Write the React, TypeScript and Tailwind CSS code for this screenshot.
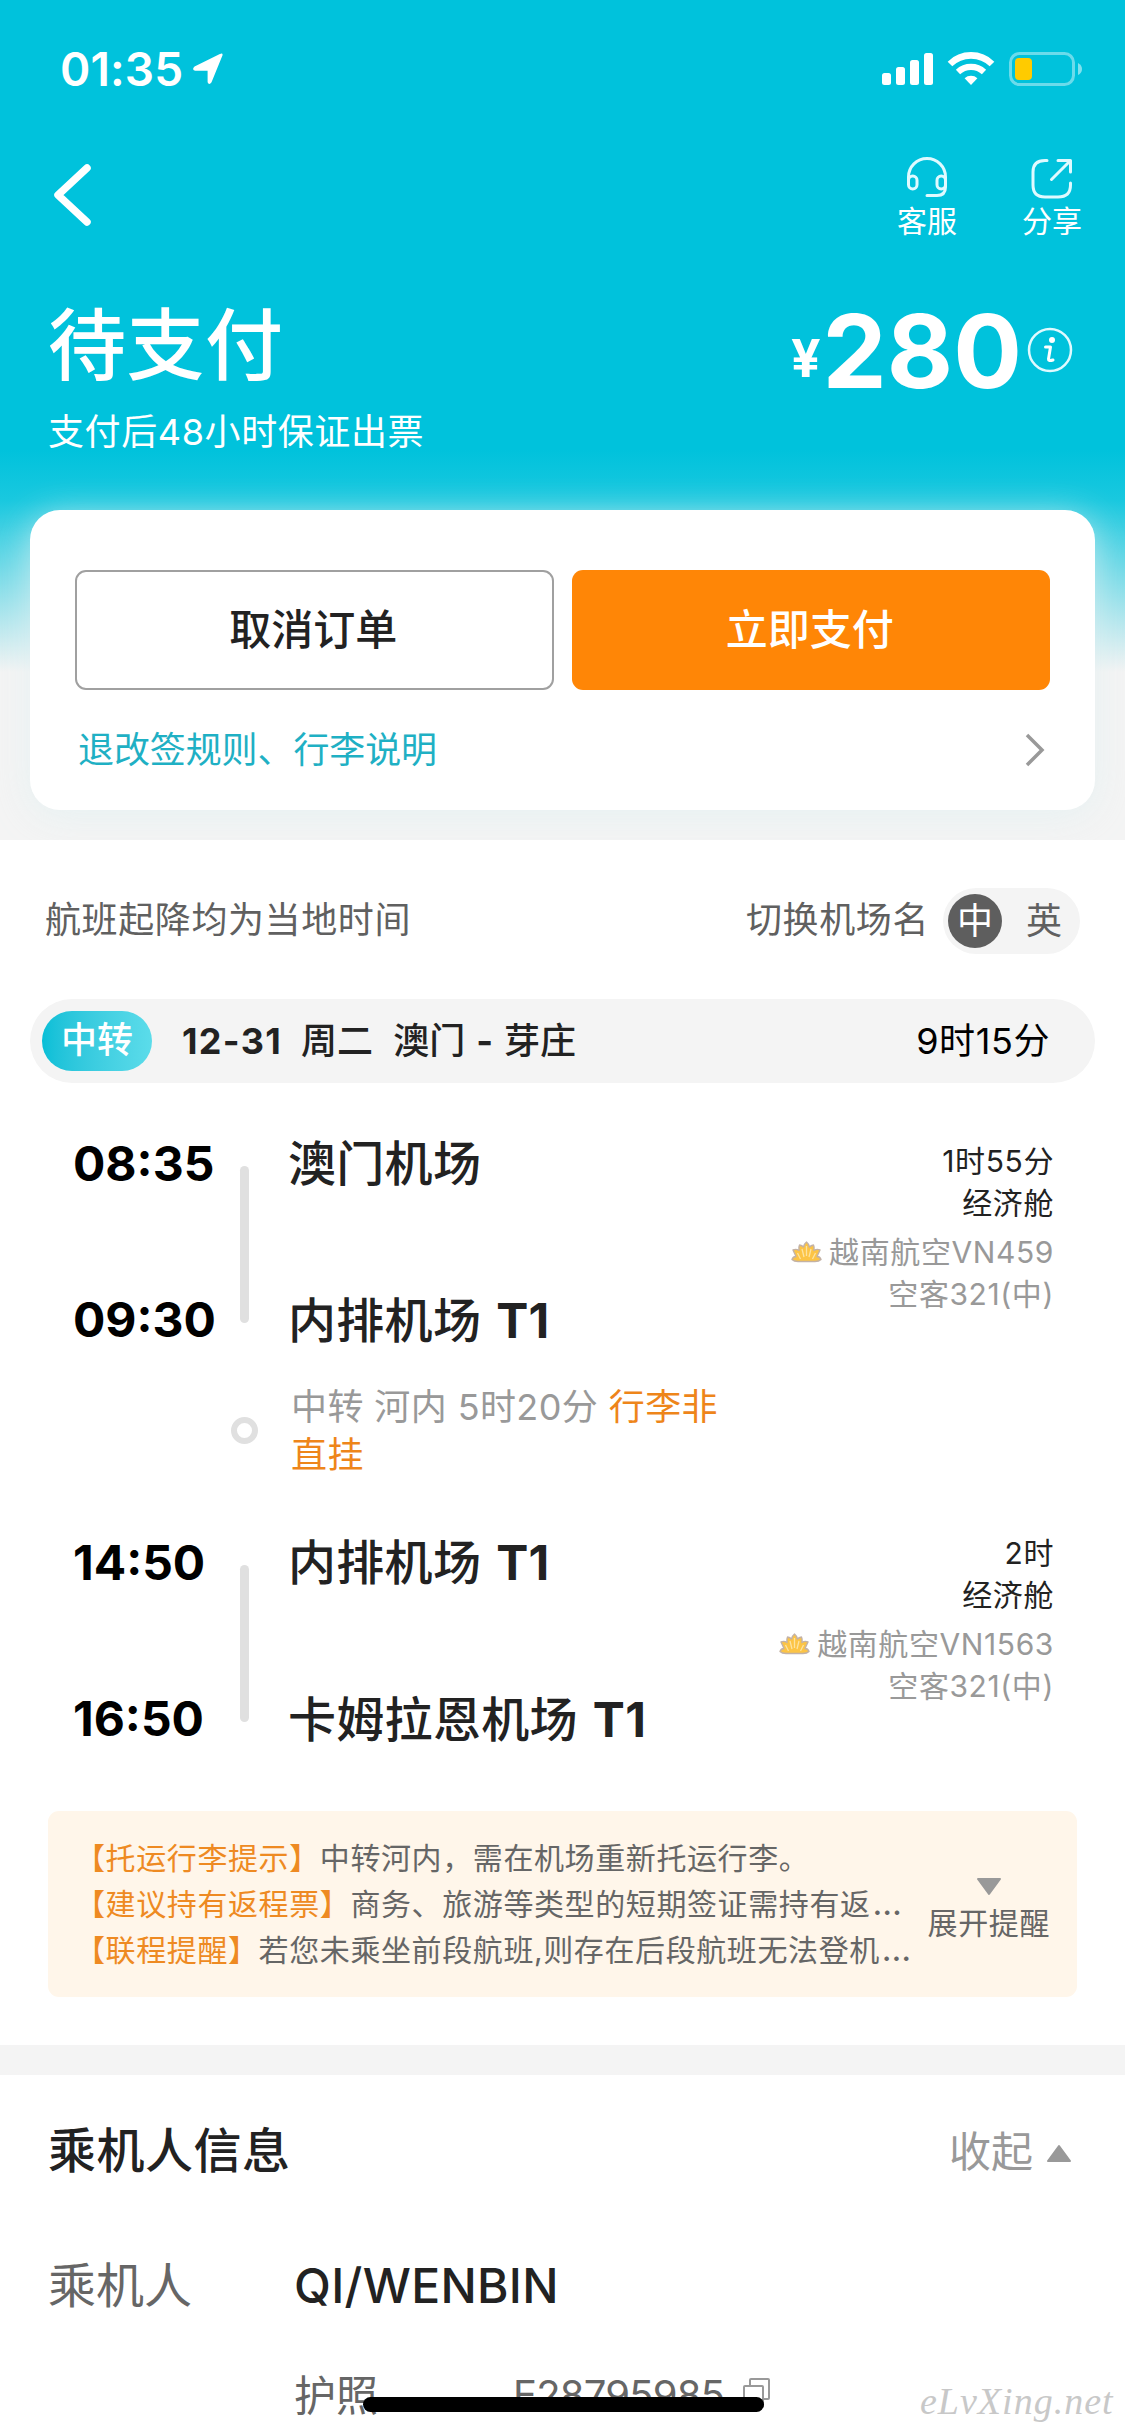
import React from 'react';

type Segment = {
  departTime: string;
  arriveTime: string;
  from: string;
  fromTerminal?: string;
  to: string;
  toTerminal?: string;
  duration: string;
  flight: string;
};

const segments: Segment[] = [
  {
    departTime: '08:35',
    arriveTime: '09:30',
    from: '澳门机场',
    to: '内排机场',
    toTerminal: 'T1',
    duration: '1时55分',
    flight: '越南航空VN459',
  },
  {
    departTime: '14:50',
    arriveTime: '16:50',
    from: '内排机场',
    fromTerminal: 'T1',
    to: '卡姆拉恩机场',
    toTerminal: 'T1',
    duration: '2时',
    flight: '越南航空VN1563',
  },
];

const notices = [
  { label: '【托运行李提示】', text: '中转河内，需在机场重新托运行李。', more: false },
  { label: '【建议持有返程票】', text: '商务、旅游等类型的短期签证需持有返', more: true },
  { label: '【联程提醒】', text: '若您未乘坐前段航班,则存在后段航班无法登机', more: true },
];

const LotusIcon = () => (
  <svg width="31" height="22" viewBox="0 0 31 22" className="mr-[7px] shrink-0">
    <path
      d="M1 18.500 Q2 15.500 5 15.500 L2 9 Q5 7.500 8 9.500 Q7.500 6 8.500 4 Q11 4.500 12.500 6 Q13.500 2.500 15.500 1 Q17.500 2.500 18.500 6 Q20 4.500 22.500 4 Q23.500 6 23 9.500 Q26 7.500 29 9 L26 15.500 Q29 15.500 30 18.500 Q28 20.500 24 20.500 H7 Q3 20.500 1 18.500 Z"
      fill="#fcc445"
      stroke="#c3b2a6"
      strokeWidth="1.4"
      strokeLinejoin="round"
    />
    <path d="M15.500 5 V15 M11 8 L13 16 M20 8 L18 16 M6.500 12 L9.500 18 M24.500 12 L21.500 18" stroke="#fde3a0" strokeWidth="1.3" fill="none" />
  </svg>
);

const StatusBar = () => (
  <div className="flex h-[138px] items-center justify-between pl-[60px] pr-[43px]">
    <div className="flex items-center">
      <span className="text-[46px] font-[560] leading-none tracking-[0.1px]">01:35</span>
      <svg width="32" height="32" viewBox="0 0 32 32" className="ml-[9px]">
        <path d="M29.500 2.200 L18.500 29 Q17.200 31 16.600 29 V16.800 H3.500 Q1 16.200 3 14.500 L28.300 2 Q30 1 29.500 2.200 Z" fill="#fff" stroke="#fff" strokeWidth="2" strokeLinejoin="round" />
      </svg>
    </div>
    <svg width="201" height="36" viewBox="0 0 201 36">
      <rect x="1" y="22" width="9" height="12" rx="2.5" fill="#fff" />
      <rect x="15" y="16" width="9" height="18" rx="2.5" fill="#fff" />
      <rect x="29" y="9" width="9" height="25" rx="2.5" fill="#fff" />
      <rect x="43" y="2" width="9" height="32" rx="2.5" fill="#fff" />
      <path d="M69 13 A30 30 0 0 1 111 13" stroke="#fff" strokeWidth="6.6" fill="none" />
      <path d="M77 21 A19 19 0 0 1 103 21" stroke="#fff" strokeWidth="6.2" fill="none" />
      <path d="M83.6 27.2 A9.5 9.5 0 0 1 96.4 27.2 L90 34 Z" fill="#fff" />
      <rect x="129.5" y="2.5" width="63" height="31" rx="9" stroke="#fff" strokeOpacity="0.42" strokeWidth="3" fill="none" />
      <path d="M197 12 Q201 14 201 18 T197 24 Z" fill="#fff" fillOpacity="0.5" />
      <rect x="134" y="7" width="17" height="22" rx="4" fill="#ffcb00" />
    </svg>
  </div>
);

const NavBar = () => (
  <div className="flex h-[114px] justify-between pl-[50px] pr-[43px] pt-[16px]">
    <svg width="44" height="82" viewBox="0 0 44 82" fill="none" stroke="#fff" strokeWidth="7.5" strokeLinecap="round" strokeLinejoin="round">
      <path d="M37 14 L8 41 L37 68" />
    </svg>
    <div className="flex gap-[65px] text-[30px] font-[399] leading-[38px]">
      <div className="flex flex-col items-center">
        <svg width="48" height="48" viewBox="0 0 48 48" fill="none" stroke="#dffaff" strokeWidth="3" strokeLinecap="round">
          <path d="M5.500 28 V23 A18.500 18.500 0 0 1 42.500 23 V33 Q42.500 41.500 34 41.500 H24" />
          <rect x="5.500" y="22" width="8.500" height="13" rx="4.200" />
          <rect x="34" y="22" width="8.500" height="13" rx="4.200" />
        </svg>
        <span>客服</span>
      </div>
      <div className="flex flex-col items-center">
        <svg width="48" height="48" viewBox="0 0 48 48" fill="none" stroke="#dffaff" strokeWidth="3" strokeLinecap="round" strokeLinejoin="round">
          <path d="M19 6.500 H17 Q5 6.500 5 18 V31 Q5 43 17 43 H30 Q42.500 43 42.500 31 V29" />
          <path d="M30 6.500 H42.500 V18 M42 7 L23.500 25.500" />
        </svg>
        <span>分享</span>
      </div>
    </div>
  </div>
);

const OrderHeader = () => (
  <div className="flex h-[258px] justify-between pl-[48px] pr-[52px]">
    <div className="pt-[44px]">
      <h1 className="text-[78px] font-medium leading-[100px] tracking-[0.5px]">待支付</h1>
      <p className="mt-[12px] text-[36px] font-[399] leading-[48px] tracking-[0.6px]">支付后48小时保证出票</p>
    </div>
    <div className="flex items-start pt-[39px]">
      <span className="mr-[2px] mt-[38px] text-[52px] font-bold leading-[60px]">¥</span>
      <span className="text-[102px] font-bold leading-[120px]">280</span>
      <svg width="46" height="46" viewBox="0 0 46 46" className="ml-[5px] mt-[36px]">
        <circle cx="23" cy="23" r="21" fill="none" stroke="#dffaff" strokeWidth="2.500" />
        <circle cx="25" cy="13" r="3" fill="#fff" />
        <path d="M18.500 20 H23.500 L21.500 32 Q21.300 34.500 26 33" fill="none" stroke="#fff" strokeWidth="3" strokeLinecap="round" strokeLinejoin="round" />
      </svg>
    </div>
  </div>
);

const ActionCard = () => (
  <div className="mx-[30px] h-[300px] rounded-[30px] bg-white px-[45px] pt-[60px] shadow-[0_6px_36px_rgba(225,240,242,0.75)]">
    <div className="grid grid-cols-2 gap-[18px] text-[42px] font-medium">
      <button className="h-[120px] rounded-[11px] border-2 border-[#a0a0a0] pb-[2px] pr-[2px] text-[#222]">取消订单</button>
      <button className="h-[120px] rounded-[11px] bg-[#ff8606] pb-[2px] pr-[2px] text-white">立即支付</button>
    </div>
    <div className="flex h-[120px] items-center justify-between pl-[3px] pr-[4px]">
      <span className="text-[36px] font-[399] tracking-[-0.1px] text-[#1fb0c4]">退改签规则、行李说明</span>
      <svg width="22" height="34" viewBox="0 0 22 34" fill="none" stroke="#999" strokeWidth="3.500">
        <path d="M3 2 L18 17 L3 32" />
      </svg>
    </div>
  </div>
);

const Airport = ({ name, terminal }: { name: string; terminal?: string }) => (
  <span>
    {name}
    {terminal && <b className="ml-[15px] font-bold">{terminal}</b>}
  </span>
);

const SegmentBlock = ({ segment, className = '' }: { segment: Segment; className?: string }) => (
  <div className="flex h-[205px] pl-[73px] pr-[71px] text-[48px] leading-[48px]">
    <div className="flex w-[167px] flex-col gap-[108px] font-bold text-black">
      <span>{segment.departTime}</span>
      <span>{segment.arriveTime}</span>
    </div>
    <div className="mt-[26px] h-[157px] w-[9px] rounded-full bg-[#e0e0e0]" />
    <div className="ml-[39px] flex flex-1 flex-col gap-[109px] whitespace-nowrap font-medium tracking-[0.3px] text-[#222]">
      <Airport name={segment.from} terminal={segment.fromTerminal} />
      <Airport name={segment.to} terminal={segment.toTerminal} />
    </div>
    <div className={`flex flex-col items-end text-[30px] leading-[42px] tracking-[0.6px] ${className}`}>
      <span className="text-[#222]">{segment.duration}</span>
      <span className="text-[#222]">经济舱</span>
      <span className="mt-[7px] flex items-center font-[399] text-[#999]">
        <LotusIcon />
        {segment.flight}
      </span>
      <span className="font-[399] text-[#999]">空客321(中)</span>
    </div>
  </div>
);

const FlightSection = () => (
  <section className="h-[1205px] bg-white pt-[48px]">
    <div className="flex h-[66px] items-center justify-between pl-[45px] pr-[45px] text-[36px] font-[399] tracking-[0.6px] text-[#606060]">
      <span className="-mt-[2px]">航班起降均为当地时间</span>
      <div className="flex items-center">
        <span className="-mt-[2px]">切换机场名</span>
        <div className="ml-[14px] flex h-[66px] w-[137px] items-center rounded-full bg-[#f4f4f4] pl-[5px] tracking-normal">
          <span className="flex size-[54px] items-center justify-center rounded-full bg-[#5e5e5e] text-white">中</span>
          <span className="ml-[24px]">英</span>
        </div>
      </div>
    </div>

    <div className="mx-[30px] mt-[45px] flex h-[84px] items-center rounded-full bg-[#f4f4f4] pl-[12px] pr-[45px] text-[36px]">
      <span className="flex h-[60px] w-[110px] items-center justify-center rounded-full bg-gradient-to-r from-[#05bfd7] to-[#5bdcea] pb-[2px] font-medium text-white">中转</span>
      <div className="ml-[30px] flex whitespace-pre font-medium text-[#222]">
        <b className="font-bold tracking-[1.3px]">12-31</b>
        <span className="ml-[19px]">周二</span>
        <span className="ml-[20px]">澳门</span>
        <b className="mx-[11px] font-bold">-</b>
        <span>芽庄</span>
      </div>
      <span className="ml-auto tracking-[0.6px] text-black">9时15分</span>
    </div>

    <div className="pt-[57px]">
      <SegmentBlock segment={segments[0]} />
      <div className="flex h-[194px] pl-[231px] pt-[38px]">
        <div className="mt-[34px] size-[27px] rounded-full border-[6px] border-[#e0e0e0]" />
        <p className="ml-[33px] w-[440px] text-[36px] font-[399] leading-[48px] tracking-[0.4px] text-[#999]">
          中转 河内 5时20分 <span className="text-[#ee851a]">行李非<br />直挂</span>
        </p>
      </div>
      <SegmentBlock segment={segments[1]} className="-mt-[7px]" />
    </div>

    <div className="mx-[48px] mt-[67px] flex h-[186px] items-center justify-between rounded-[11px] bg-[#fff6ea] pl-[27px] pr-[27px] text-[30px] tracking-[0.6px]">
      <div className="leading-[46px]">
        {notices.map((notice) => (
          <div key={notice.label} className="whitespace-nowrap font-[399] text-[#666]">
            <span className="font-normal text-[#ee8a22]">{notice.label}</span>
            {notice.text}
            {notice.more && <span className="ml-[2px] text-[34px] leading-none">…</span>}
          </div>
        ))}
      </div>
      <div className="flex flex-col items-center pt-[12px] font-[399] text-[#666]">
        <svg width="28" height="20" viewBox="0 0 28 20">
          <path d="M3 2 H25 L14 17 Z" fill="#999" stroke="#999" strokeWidth="2" strokeLinejoin="round" />
        </svg>
        <span className="mt-[6px] leading-[40px]">展开提醒</span>
      </div>
    </div>
  </section>
);

const PassengerSection = () => (
  <section className="mt-[30px] h-[361px] bg-white pl-[48px] pr-[52px]">
    <div className="flex h-[152px] items-center justify-between">
      <h2 className="text-[48px] font-medium tracking-[0.5px] text-[#222]">乘机人信息</h2>
      <span className="flex items-center text-[42px] font-[399] text-[#999]">
        收起
        <svg width="28" height="20" viewBox="0 0 28 20" className="ml-[12px] mt-[4px]">
          <path d="M3 18 H25 L14 3 Z" fill="#999" stroke="#999" strokeWidth="2" strokeLinejoin="round" />
        </svg>
      </span>
    </div>
    <div className="flex h-[118px] items-center text-[48px]">
      <span className="w-[246px] font-[399] text-[#666]">乘机人</span>
      <span className="font-medium tracking-[0.3px] text-[#222]">QI/WENBIN</span>
    </div>
    <div className="flex h-[100px] items-center pl-[246px] text-[42px] font-[399] text-[#666]">
      <span className="w-[219px]">护照</span>
      <span className="text-[40px] tracking-[-0.8px]">E28795985</span>
      <svg width="30" height="34" viewBox="0 0 30 34" fill="none" stroke="#999" strokeWidth="2" className="-mt-[4px] ml-[18px]">
        <path d="M8 11 V4 Q8 3 9 3 H26 Q27 3 27 4 V22 Q27 23 26 23 H22" />
        <rect x="2" y="10" width="19" height="21" rx="1" />
      </svg>
    </div>
  </section>
);

export default function App() {
  return (
    <main className="relative h-[2436px] w-[1125px] overflow-hidden bg-[#f4f4f4] font-['Inter','Noto_Sans_CJK_SC',sans-serif]">
      <div className="h-[840px] bg-[linear-gradient(to_bottom,#00c2dc_0px,#00c2dc_450px,#19c8df_500px,#f4f4f4_672px)] text-white">
        <StatusBar />
        <NavBar />
        <OrderHeader />
        <ActionCard />
      </div>
      <FlightSection />
      <PassengerSection />

      {/* home indicator */}
      <div className="absolute left-[363px] top-[2397px] h-[15px] w-[401px] rounded-full bg-black" />
      <span className="absolute left-[920px] top-[2378px] font-['Liberation_Serif',serif] text-[38px] italic leading-[46px] tracking-[1px] text-[#c8c8c8]">eLvXing.net</span>
    </main>
  );
}
